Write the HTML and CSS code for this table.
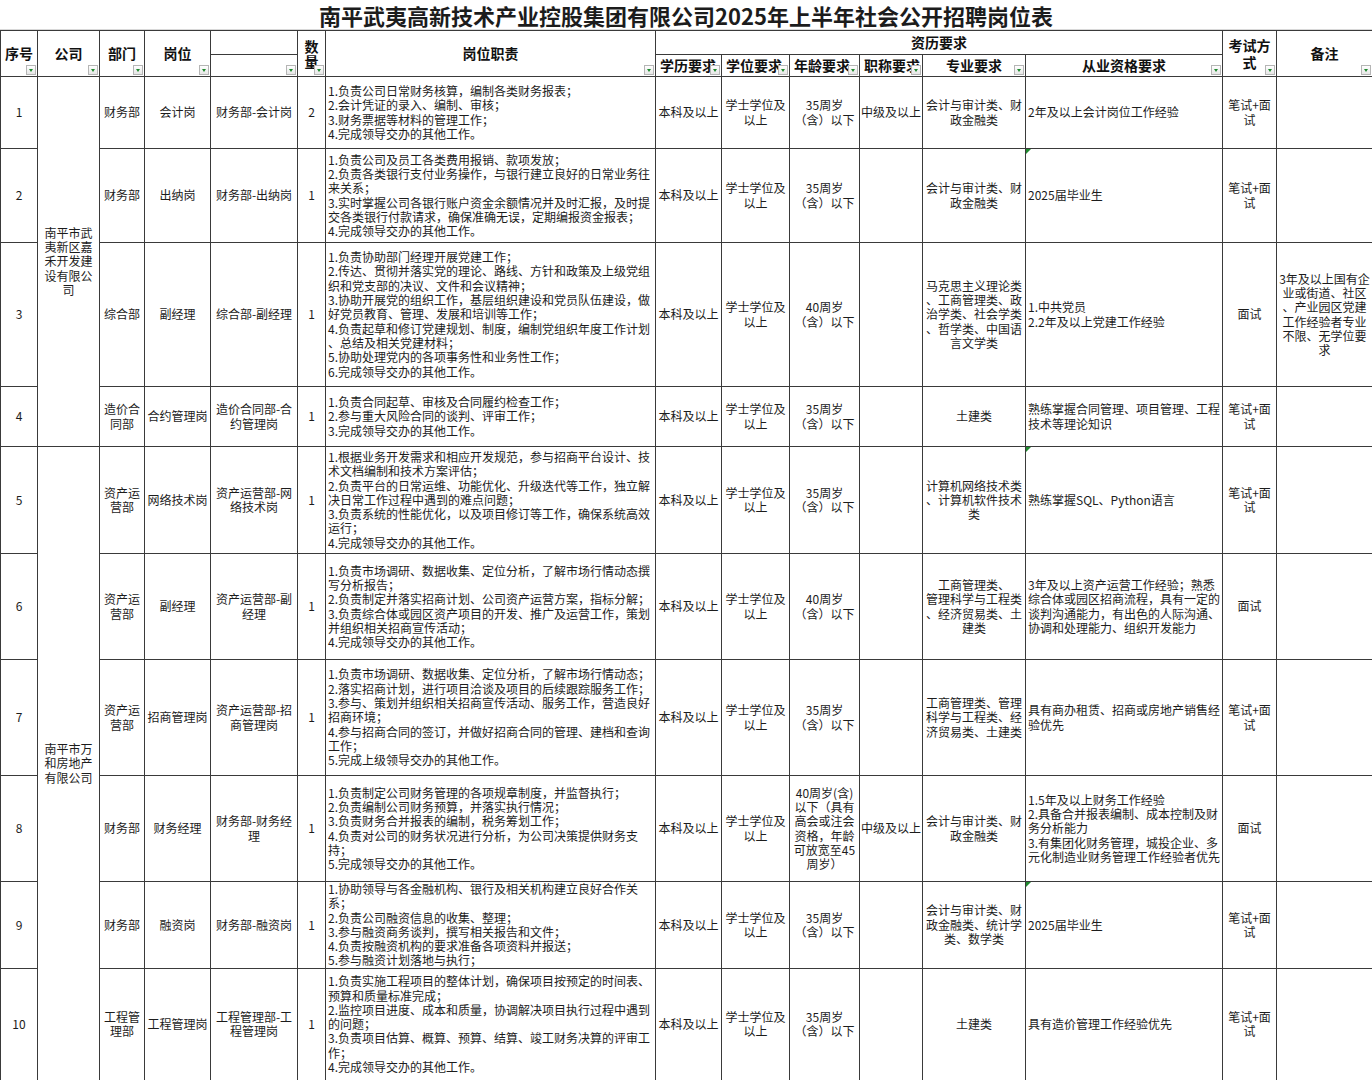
FILE: index.html
```html
<!DOCTYPE html>
<html lang="zh-CN">
<head>
<meta charset="utf-8">
<title>招聘岗位表</title>
<link rel="stylesheet" href="styles.css">
</head>
<body>
<div class="sheet-title">南平武夷高新技术产业控股集团有限公司2025年上半年社会公开招聘岗位表</div>
<table class="grid">
<colgroup>
<col class="c-no"><col class="c-co"><col class="c-dept"><col class="c-post"><col class="c-code"><col class="c-num"><col class="c-duty"><col class="c-edu"><col class="c-deg"><col class="c-age"><col class="c-title"><col class="c-major"><col class="c-qual"><col class="c-exam"><col class="c-note">
</colgroup>
<thead>
<tr class="hr1">
<th rowspan="2">序号<span class="filter"></span></th>
<th rowspan="2">公司<span class="filter"></span></th>
<th rowspan="2">部门<span class="filter"></span></th>
<th rowspan="2">岗位<span class="filter"></span></th>
<th></th>
<th rowspan="2" class="vert">数<br>量<span class="filter"></span></th>
<th rowspan="2">岗位职责<span class="filter"></span></th>
<th colspan="6">资历要求</th>
<th rowspan="2">考试方<br>式<span class="filter"></span></th>
<th rowspan="2">备注<span class="filter"></span></th>
</tr>
<tr class="hr2">
<th><span class="filter"></span></th>
<th class="sub">学历要求<span class="filter"></span></th>
<th class="sub">学位要求<span class="filter"></span></th>
<th class="sub">年龄要求<span class="filter"></span></th>
<th class="sub">职称要求<span class="filter"></span></th>
<th>专业要求<span class="filter"></span></th>
<th>从业资格要求<span class="filter"></span></th>
</tr>
</thead>
<tbody>
<tr class="row-1">
<td>1</td>
<td rowspan="4" class="company">南平市武<br>夷新区嘉<br>禾开发建<br>设有限公<br>司</td>
<td>财务部</td><td>会计岗</td><td>财务部-会计岗</td><td>2</td>
<td class="left">1.负责公司日常财务核算，编制各类财务报表；<br>2.会计凭证的录入、编制、审核；<br>3.财务票据等材料的管理工作；<br>4.完成领导交办的其他工作。</td>
<td>本科及以上</td><td>学士学位及<br>以上</td><td>35周岁<br>（含）以下</td><td>中级及以上</td>
<td>会计与审计类、财<br>政金融类</td>
<td class="left">2年及以上会计岗位工作经验</td>
<td>笔试+面<br>试</td><td></td>
</tr>
<tr class="row-2">
<td>2</td>
<td>财务部</td><td>出纳岗</td><td>财务部-出纳岗</td><td>1</td>
<td class="left">1.负责公司及员工各类费用报销、款项发放；<br>2.负责各类银行支付业务操作，与银行建立良好的日常业务往<br>来关系；<br>3.实时掌握公司各银行账户资金余额情况并及时汇报，及时提<br>交各类银行付款请求，确保准确无误，定期编报资金报表；<br>4.完成领导交办的其他工作。</td>
<td>本科及以上</td><td>学士学位及<br>以上</td><td>35周岁<br>（含）以下</td><td></td>
<td>会计与审计类、财<br>政金融类</td>
<td class="left flag">2025届毕业生</td>
<td>笔试+面<br>试</td><td></td>
</tr>
<tr class="row-3">
<td>3</td>
<td>综合部</td><td>副经理</td><td>综合部-副经理</td><td>1</td>
<td class="left">1.负责协助部门经理开展党建工作；<br>2.传达、贯彻并落实党的理论、路线、方针和政策及上级党组<br>织和党支部的决议、文件和会议精神；<br>3.协助开展党的组织工作，基层组织建设和党员队伍建设，做<br>好党员教育、管理、发展和培训等工作；<br>4.负责起草和修订党建规划、制度，编制党组织年度工作计划<br>、总结及相关党建材料；<br>5.协助处理党内的各项事务性和业务性工作；<br>6.完成领导交办的其他工作。</td>
<td>本科及以上</td><td>学士学位及<br>以上</td><td>40周岁<br>（含）以下</td><td></td>
<td>马克思主义理论类<br>、工商管理类、政<br>治学类、社会学类<br>、哲学类、中国语<br>言文学类</td>
<td class="left">1.中共党员<br>2.2年及以上党建工作经验</td>
<td>面试</td>
<td>3年及以上国有企<br>业或街道、社区<br>、产业园区党建<br>工作经验者专业<br>不限、无学位要<br>求</td>
</tr>
<tr class="row-4">
<td>4</td>
<td>造价合<br>同部</td><td>合约管理岗</td><td>造价合同部-合<br>约管理岗</td><td>1</td>
<td class="left">1.负责合同起草、审核及合同履约检查工作；<br>2.参与重大风险合同的谈判、评审工作；<br>3.完成领导交办的其他工作。</td>
<td>本科及以上</td><td>学士学位及<br>以上</td><td>35周岁<br>（含）以下</td><td></td>
<td>土建类</td>
<td class="left">熟练掌握合同管理、项目管理、工程<br>技术等理论知识</td>
<td>笔试+面<br>试</td><td></td>
</tr>
<tr class="row-5">
<td>5</td>
<td rowspan="6" class="company">南平市万<br>和房地产<br>有限公司</td>
<td>资产运<br>营部</td><td>网络技术岗</td><td>资产运营部-网<br>络技术岗</td><td>1</td>
<td class="left">1.根据业务开发需求和相应开发规范，参与招商平台设计、技<br>术文档编制和技术方案评估；<br>2.负责平台的日常运维、功能优化、升级迭代等工作，独立解<br>决日常工作过程中遇到的难点问题；<br>3.负责系统的性能优化，以及项目修订等工作，确保系统高效<br>运行；<br>4.完成领导交办的其他工作。</td>
<td>本科及以上</td><td>学士学位及<br>以上</td><td>35周岁<br>（含）以下</td><td></td>
<td>计算机网络技术类<br>、计算机软件技术<br>类</td>
<td class="left flag">熟练掌握SQL、Python语言</td>
<td>笔试+面<br>试</td><td></td>
</tr>
<tr class="row-6">
<td>6</td>
<td>资产运<br>营部</td><td>副经理</td><td>资产运营部-副<br>经理</td><td>1</td>
<td class="left">1.负责市场调研、数据收集、定位分析，了解市场行情动态撰<br>写分析报告；<br>2.负责制定并落实招商计划、公司资产运营方案，指标分解；<br>3.负责综合体或园区资产项目的开发、推广及运营工作，策划<br>并组织相关招商宣传活动；<br>4.完成领导交办的其他工作。</td>
<td>本科及以上</td><td>学士学位及<br>以上</td><td>40周岁<br>（含）以下</td><td></td>
<td>工商管理类、<br>管理科学与工程类<br>、经济贸易类、土<br>建类</td>
<td class="left">3年及以上资产运营工作经验；熟悉<br>综合体或园区招商流程，具有一定的<br>谈判沟通能力，有出色的人际沟通、<br>协调和处理能力、组织开发能力</td>
<td>面试</td><td></td>
</tr>
<tr class="row-7">
<td>7</td>
<td>资产运<br>营部</td><td>招商管理岗</td><td>资产运营部-招<br>商管理岗</td><td>1</td>
<td class="left">1.负责市场调研、数据收集、定位分析，了解市场行情动态；<br>2.落实招商计划，进行项目洽谈及项目的后续跟踪服务工作；<br>3.参与、策划并组织相关招商宣传活动、服务工作，营造良好<br>招商环境；<br>4.参与招商合同的签订，并做好招商合同的管理、建档和查询<br>工作；<br>5.完成上级领导交办的其他工作。</td>
<td>本科及以上</td><td>学士学位及<br>以上</td><td>35周岁<br>（含）以下</td><td></td>
<td>工商管理类、管理<br>科学与工程类、经<br>济贸易类、土建类</td>
<td class="left">具有商办租赁、招商或房地产销售经<br>验优先</td>
<td>笔试+面<br>试</td><td></td>
</tr>
<tr class="row-8">
<td>8</td>
<td>财务部</td><td>财务经理</td><td>财务部-财务经<br>理</td><td>1</td>
<td class="left">1.负责制定公司财务管理的各项规章制度，并监督执行；<br>2.负责编制公司财务预算，并落实执行情况；<br>3.负责财务合并报表的编制，税务筹划工作；<br>4.负责对公司的财务状况进行分析，为公司决策提供财务支<br>持；<br>5.完成领导交办的其他工作。</td>
<td>本科及以上</td><td>学士学位及<br>以上</td><td>40周岁(含)<br>以下（具有<br>高会或注会<br>资格，年龄<br>可放宽至45<br>周岁）</td><td>中级及以上</td>
<td>会计与审计类、财<br>政金融类</td>
<td class="left">1.5年及以上财务工作经验<br>2.具备合并报表编制、成本控制及财<br>务分析能力<br>3.有集团化财务管理，城投企业、多<br>元化制造业财务管理工作经验者优先</td>
<td>面试</td><td></td>
</tr>
<tr class="row-9">
<td>9</td>
<td>财务部</td><td>融资岗</td><td>财务部-融资岗</td><td>1</td>
<td class="left">1.协助领导与各金融机构、银行及相关机构建立良好合作关<br>系；<br>2.负责公司融资信息的收集、整理；<br>3.参与融资商务谈判，撰写相关报告和文件；<br>4.负责按融资机构的要求准备各项资料并报送；<br>5.参与融资计划落地与执行；</td>
<td>本科及以上</td><td>学士学位及<br>以上</td><td>35周岁<br>（含）以下</td><td></td>
<td>会计与审计类、财<br>政金融类、统计学<br>类、数学类</td>
<td class="left flag">2025届毕业生</td>
<td>笔试+面<br>试</td><td></td>
</tr>
<tr class="row-10">
<td>10</td>
<td>工程管<br>理部</td><td>工程管理岗</td><td>工程管理部-工<br>程管理岗</td><td>1</td>
<td class="left">1.负责实施工程项目的整体计划，确保项目按预定的时间表、<br>预算和质量标准完成；<br>2.监控项目进度、成本和质量，协调解决项目执行过程中遇到<br>的问题；<br>3.负责项目估算、概算、预算、结算、竣工财务决算的评审工<br>作；<br>4.完成领导交办的其他工作。</td>
<td>本科及以上</td><td>学士学位及<br>以上</td><td>35周岁<br>（含）以下</td><td></td>
<td>土建类</td>
<td class="left">具有造价管理工作经验优先</td>
<td>笔试+面<br>试</td><td></td>
</tr>
</tbody>
</table>
</body>
</html>
```

FILE: styles.css
```css
* { box-sizing: border-box; }
html, body { margin: 0; padding: 0; background: #fff; }
body {
  width: 1372px;
  font-family: "Noto Sans CJK SC", "Noto Sans", "Liberation Sans", sans-serif;
  color: #1c1c1c;
}
.sheet-title {
  height: 30px;
  display: flex;
  align-items: center;
  justify-content: center;
  font-size: 22px;
  font-weight: 700;
  letter-spacing: 0;
  border-bottom: 1px solid #d8d8d8;
}
.grid {
  width: 1372px;
  table-layout: fixed;
  border-collapse: collapse;
  font-size: 12px;
  line-height: 14.3px;
}
.c-no { width: 37px; }
.c-co { width: 62px; }
.c-dept { width: 45px; }
.c-post { width: 66px; }
.c-code { width: 87px; }
.c-num { width: 28px; }
.c-duty { width: 330px; }
.c-edu { width: 66px; }
.c-deg { width: 68px; }
.c-age { width: 70px; }
.c-title { width: 63px; }
.c-major { width: 103px; }
.c-qual { width: 197px; }
.c-exam { width: 54px; }
.c-note { width: 96px; }

.grid th, .grid td {
  border: 1px solid #3a3a3a;
  padding: 0 1px;
  text-align: center;
  vertical-align: middle;
  white-space: nowrap;
  overflow: hidden;
  font-weight: 400;
}
.grid th {
  position: relative;
  font-weight: 700;
  font-size: 14px;
  line-height: 17px;
  color: #111;
}
.grid th.sub { text-align: left; padding-left: 4px; }
.grid th.vert { line-height: 15px; }
.hr1 { height: 24px; }
.hr2 { height: 22px; }
.grid td.left { text-align: left; padding-left: 2px; }
.grid td.company { padding: 0 6px; }
.grid td.flag { position: relative; }
.grid td.flag::before {
  content: "";
  position: absolute;
  left: 0;
  top: 0;
  border-top: 5px solid #1f8a2e;
  border-right: 5px solid transparent;
}

.row-1 { height: 72px; }
.row-2 { height: 94px; }
.row-3 { height: 144px; }
.row-4 { height: 60px; }
.row-5 { height: 107px; }
.row-6 { height: 106px; }
.row-7 { height: 116px; }
.row-8 { height: 106px; }
.row-9 { height: 85px; }
.row-10 { height: 112px; }

.filter {
  position: absolute;
  right: 1px;
  bottom: 1px;
  width: 10px;
  height: 10px;
  border: 1px solid #b5b5b5;
  background: linear-gradient(#ffffff, #e6e6e6);
}
.filter::after {
  content: "";
  position: absolute;
  left: 2px;
  top: 3px;
  border-left: 2.5px solid transparent;
  border-right: 2.5px solid transparent;
  border-top: 3px solid #1f8a2e;
}
```
